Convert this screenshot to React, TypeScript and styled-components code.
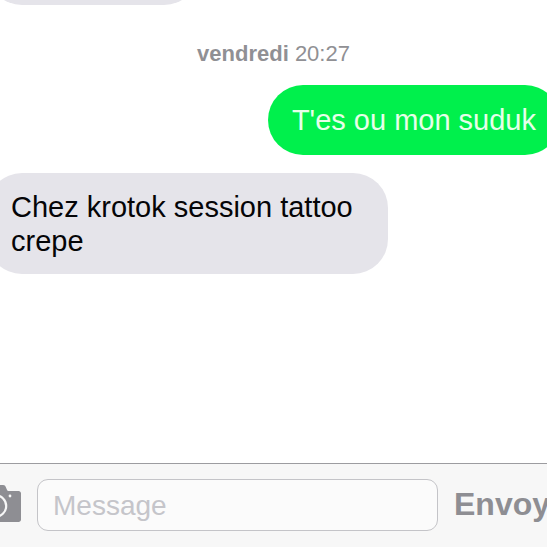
import React from "react";
import styled, { createGlobalStyle, css } from "styled-components";

const GlobalStyle = createGlobalStyle`
  *, *::before, *::after { box-sizing: border-box; }
  body {
    margin: 0;
    background: #ffffff;
    font-family: "Liberation Sans", Arial, Helvetica, sans-serif;
  }
`;

const Screen = styled.div`
  display: flex;
  flex-direction: column;
  min-height: 100vh;
  overflow: hidden;
`;

const Thread = styled.main`
  flex: 1;
  display: flex;
  flex-direction: column;
  margin: -65px -13px 0;
`;

const Bubble = styled.p<{ $sent?: boolean }>`
  margin: 0;
  padding: 18px 24px;
  border-radius: 35px;
  font-size: 29px;
  line-height: 34px;
  ${({ $sent }) =>
    $sent
      ? css`
          align-self: flex-end;
          background: #00f04c;
          color: #e6ffe9;
        `
      : css`
          align-self: flex-start;
          max-width: 401px;
          padding: 17px 24px 16px;
          margin-top: 18px;
          background: #e5e4ea;
          color: #050507;
        `}
`;

const EarlierBubble = styled.div`
  width: 212px;
  height: 70px;
  border-radius: 35px;
  background: #e5e4ea;
`;

const Stamp = styled.time`
  align-self: center;
  margin: 36px 0 18px;
  font-size: 22px;
  line-height: 26px;
  color: #909094;
`;

const Composer = styled.form`
  display: flex;
  align-items: center;
  gap: 16px;
  margin-right: -56px;
  padding: 15px 0 16px;
  border-top: 1px solid #9c9ca0;
  background: #f7f7f7;
`;

const CameraButton = styled.button`
  flex: none;
  display: flex;
  width: 51px;
  margin-left: -30px;
  padding: 0 0 3px;
  border: 0;
  background: none;
  color: #8e8e93;
`;

const Field = styled.input`
  flex: 1;
  min-width: 0;
  height: 52px;
  padding: 2px 15px 0;
  border: 1px solid #c4c4c8;
  border-radius: 11px;
  background: #fbfbfb;
  font: 28px "Liberation Sans", Arial, sans-serif;
  color: #050507;
  outline: none;

  &::placeholder {
    color: #c5c5ca;
    opacity: 1;
  }
`;

const SendButton = styled.button`
  flex: none;
  width: 149px;
  padding: 0 0 2px;
  border: 0;
  background: none;
  font: bold 32px "Liberation Sans", Arial, sans-serif;
  text-align: left;
  color: #8e8e93;
`;

function CameraIcon() {
  return (
    <svg width="51" height="37" viewBox="0 0 51 37" aria-hidden="true">
      <path
        fill="currentColor"
        d="M2.500 6H12C13.500 6 14 5 14.600 3.400C15.400 1.200 16.200 0 18 0H33C34.800 0 35.600 1.200 36.400 3.400C37 5 37.500 6 39 6H48.500C50 6 51 7 51 8.500V34.500C51 36 50 37 48.500 37H2.500C1 37 0 36 0 34.500V8.500C0 7 1 6 2.500 6Z"
      />
      <circle cx="25.500" cy="21" r="10.700" fill="none" stroke="#f7f7f7" strokeWidth="2.200" />
      <circle cx="40" cy="11" r="1.400" fill="#f7f7f7" />
    </svg>
  );
}

export default function App() {
  return (
    <>
      <GlobalStyle />
      <Screen>
        <Thread>
          <EarlierBubble />
          <Stamp>
            <b>vendredi</b> 20:27
          </Stamp>
          <Bubble $sent>T'es ou mon suduk</Bubble>
          <Bubble>Chez krotok session tattoo crepe</Bubble>
        </Thread>
        <Composer onSubmit={(event) => event.preventDefault()}>
          <CameraButton type="button" aria-label="Photo">
            <CameraIcon />
          </CameraButton>
          <Field type="text" placeholder="Message" aria-label="Message" />
          <SendButton type="submit">Envoy</SendButton>
        </Composer>
      </Screen>
    </>
  );
}
